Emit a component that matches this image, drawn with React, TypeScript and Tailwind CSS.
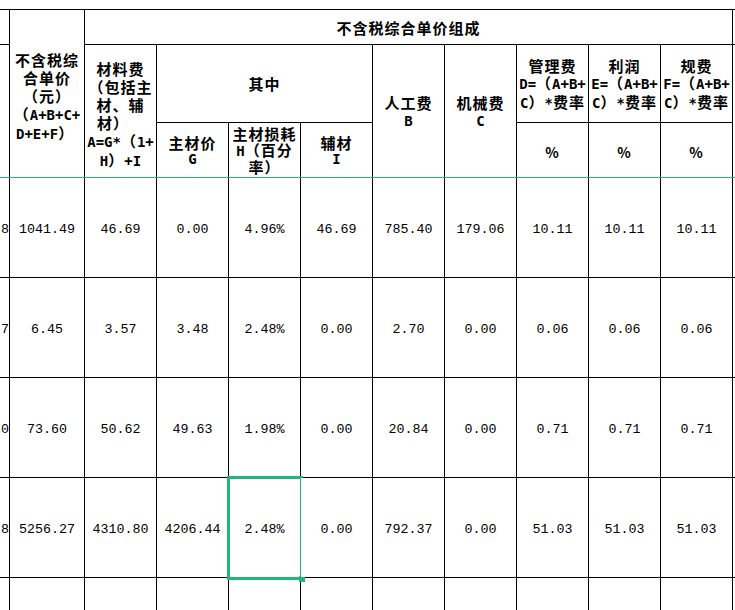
import type { ReactNode } from 'react'

const COLS = 'grid grid-cols-[9px_74px_repeat(9,71px)_1fr] w-[760px] gap-px bg-black'

const M = ({ children }: { children: ReactNode }) => (
  <span className="font-['DejaVu_Sans_Mono',monospace] text-[14px] font-bold tracking-normal">{children}</span>
)

const Head = ({
  className = '',
  lh = 'leading-[18px]',
  children,
}: {
  className?: string
  lh?: string
  children?: ReactNode
}) => (
  <div
    className={`flex flex-col items-center justify-center bg-white text-center whitespace-nowrap ${lh} ${className}`}>
    {children}
  </div>
)

const rows = [
  ['8', '1041.49', '46.69', '0.00', '4.96%', '46.69', '785.40', '179.06', '10.11', '10.11', '10.11'],
  ['7', '6.45', '3.57', '3.48', '2.48%', '0.00', '2.70', '0.00', '0.06', '0.06', '0.06'],
  ['0', '73.60', '50.62', '49.63', '1.98%', '0.00', '20.84', '0.00', '0.71', '0.71', '0.71'],
  ['8', '5256.27', '4310.80', '4206.44', '2.48%', '0.00', '792.37', '0.00', '51.03', '51.03', '51.03'],
]

const App = () => {
  return (
    <div className="w-[735px] h-[610px] overflow-hidden bg-white pt-[9px] text-black">
      {/* header */}
      <div
        className={`${COLS} grid-rows-[34px_77px_54px] border-t border-black font-['Noto_Sans_CJK_SC',sans-serif] font-bold text-[15px] tracking-[1px]`}>
        <Head className="col-start-1 row-start-1" />
        <Head className="col-start-1 row-start-2 row-span-2" />

        <Head className="col-start-2 row-start-1 row-span-3 pt-[6px]">
          <div>不含税综</div>
          <div>合单价</div>
          <div>（元）</div>
          <div>
            （<M>A+B+C+</M>
          </div>
          <div className="self-start pl-[6px]">
            <M>D+E+F</M>）
          </div>
        </Head>

        <Head className="col-start-3 col-span-9 row-start-1 pt-[2px]">不含税综合单价组成</Head>
        <Head className="col-start-12 row-start-1" />

        <Head className="col-start-3 row-start-2 row-span-2 pt-[7px]">
          <div>材料费</div>
          <div>（包括主</div>
          <div>材、辅</div>
          <div className="self-start pl-[12px]">材）</div>
          <div>
            <M>A=G*</M>（<M>1+</M>
          </div>
          <div>
            <M>H</M>）<M>+I</M>
          </div>
        </Head>

        <Head className="col-start-4 col-span-3 row-start-2">其中</Head>

        <Head lh="leading-[19px]" className="col-start-7 row-start-2 row-span-2 pt-[2px]">
          <div>人工费</div>
          <M>B</M>
        </Head>
        <Head lh="leading-[19px]" className="col-start-8 row-start-2 row-span-2 pt-[2px]">
          <div>机械费</div>
          <M>C</M>
        </Head>

        {[
          ['管理费', 'D='],
          ['利润', 'E='],
          ['规费', 'F='],
        ].map(([name, key], i) => (
          <Head
            key={name}
            lh="leading-[17px]"
            className={`row-start-2 pt-[2px] ${['col-start-9', 'col-start-10', 'col-start-11'][i]}`}>
            <div>{name}</div>
            <div>
              <M>{key}</M>（<M>A+B+</M>
            </div>
            <div>
              <M>C</M>）<M>*</M>费率
            </div>
          </Head>
        ))}
        <Head className="col-start-12 row-start-2 row-span-2" />

        <Head lh="leading-[16px]" className="col-start-4 row-start-3 pt-[2px]">
          <div>主材价</div>
          <M>G</M>
        </Head>
        <Head lh="leading-[16px]" className="col-start-5 row-start-3 pt-[1px]">
          <div>主材损耗</div>
          <div>
            <M>H</M>（百分
          </div>
          <div>率）</div>
        </Head>
        <Head lh="leading-[16px]" className="col-start-6 row-start-3 pt-[2px]">
          <div>辅材</div>
          <M>I</M>
        </Head>
        <Head className="col-start-9 row-start-3 pt-[4px] text-[14px]">%</Head>
        <Head className="col-start-10 row-start-3 pt-[4px] text-[14px]">%</Head>
        <Head className="col-start-11 row-start-3 pt-[4px] text-[14px]">%</Head>
      </div>

      {/* frozen pane line */}
      <div className="h-px w-[760px] bg-[#34a97c]" />

      {/* body */}
      <div className={`${COLS} auto-rows-[99px] font-['Liberation_Mono',monospace] text-[13.33px]`}>
        {rows.map((row, r) => (
          <div key={r} className="contents">
            {row.map((v, c) => (
              <div
                key={c}
                className={`relative flex items-center bg-white pt-[4px] ${c === 0 ? 'justify-end overflow-hidden' : 'justify-center'}`}>
                {v}
                {r === 3 && c === 4 && (
                  <div className="absolute -left-[2px] -top-[2px] -right-[3px] -bottom-[3px] border-[3px] border-[#22b67b]">
                    <div className="absolute -right-[5px] -bottom-[5px] w-[6px] h-[6px] bg-[#22b67b]" />
                  </div>
                )}
              </div>
            ))}
            <div className="bg-white" />
          </div>
        ))}
        {Array.from({ length: 12 }).map((_, c) => (
          <div key={`e-${c}`} className="bg-white" />
        ))}
      </div>
    </div>
  )
}

export default App
